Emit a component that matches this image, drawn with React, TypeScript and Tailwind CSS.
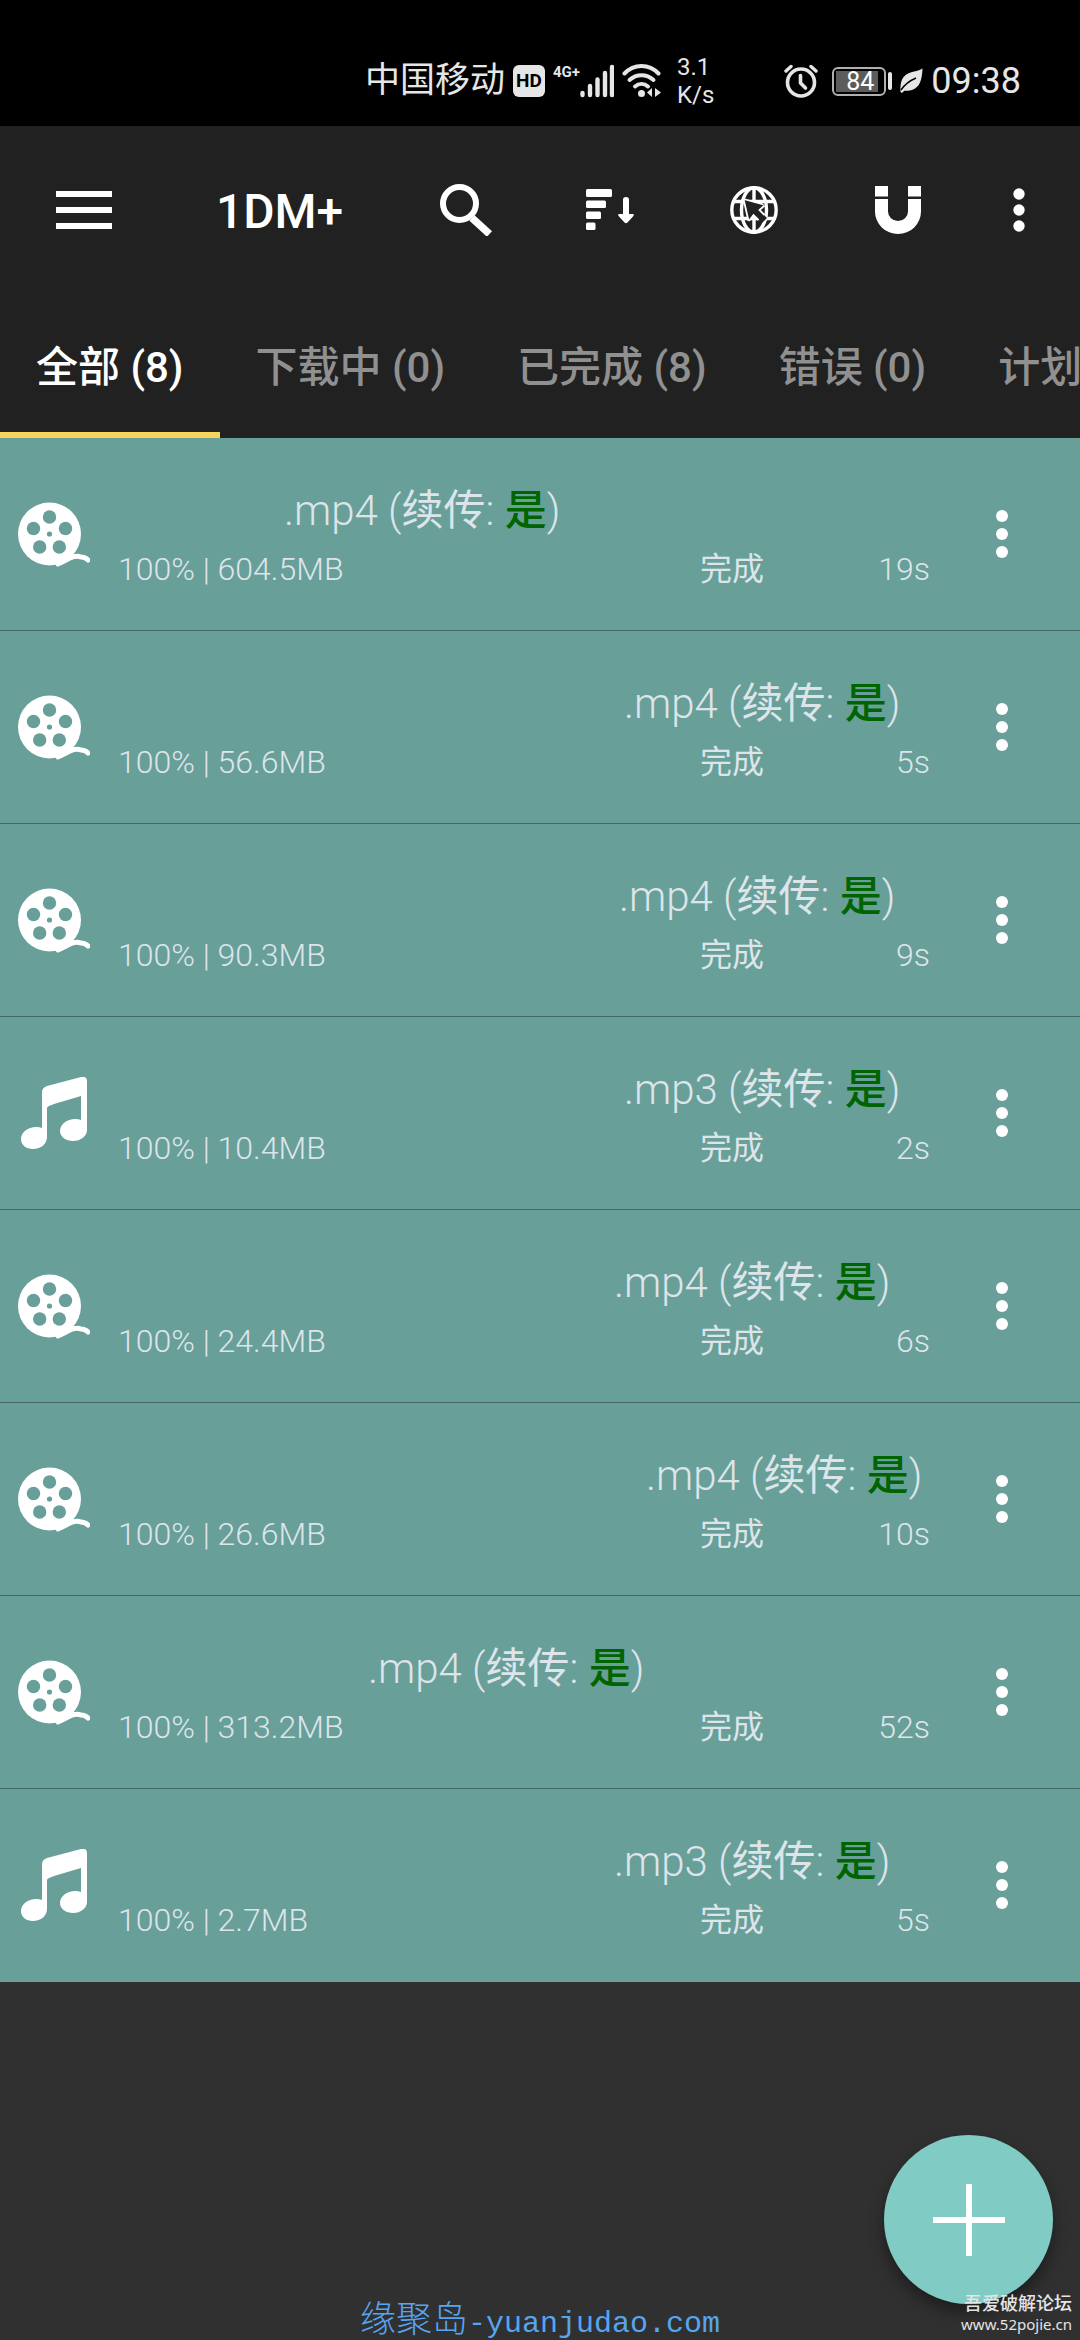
import { useState } from 'react';

type Download = {
  kind: 'video' | 'audio';
  ext: string;
  indent: string;
  size: string;
  time: string;
};

const downloads: Download[] = [
  { kind: 'video', ext: '.mp4', indent: 'pl-[166px]', size: '604.5MB', time: '19s' },
  { kind: 'video', ext: '.mp4', indent: 'pl-[506px]', size: '56.6MB', time: '5s' },
  { kind: 'video', ext: '.mp4', indent: 'pl-[501px]', size: '90.3MB', time: '9s' },
  { kind: 'audio', ext: '.mp3', indent: 'pl-[506px]', size: '10.4MB', time: '2s' },
  { kind: 'video', ext: '.mp4', indent: 'pl-[496px]', size: '24.4MB', time: '6s' },
  { kind: 'video', ext: '.mp4', indent: 'pl-[528px]', size: '26.6MB', time: '10s' },
  { kind: 'video', ext: '.mp4', indent: 'pl-[250px]', size: '313.2MB', time: '52s' },
  { kind: 'audio', ext: '.mp3', indent: 'pl-[496px]', size: '2.7MB', time: '5s' },
];

const tabs = ['全部 (8)', '下载中 (0)', '已完成 (8)', '错误 (0)', '计划'];

function FilmIcon() {
  return (
    <svg width="72" height="72" viewBox="0 0 72 72" fill="none">
      <circle cx="31.5" cy="36" r="31.5" fill="#fff" />
      <path d="M40 66c10-4 16-10 23-7 3 0 5 1 7 3" stroke="#fff" strokeWidth="5" strokeLinecap="round" />
      <path d="M36 66c12-1 18-10 26-6l-6-4z" fill="#fff" />
      <g fill="#689f99">
        <circle cx="31.5" cy="19" r="6.7" />
        <circle cx="47.5" cy="30.5" r="6.7" />
        <circle cx="41.3" cy="49" r="6.7" />
        <circle cx="21.7" cy="49" r="6.7" />
        <circle cx="15.5" cy="30.5" r="6.7" />
        <circle cx="31.5" cy="36" r="2.6" />
      </g>
    </svg>
  );
}

function MusicIcon() {
  return (
    <svg width="72" height="72" viewBox="0 0 72 72" fill="#fff">
      <path
        fillRule="evenodd"
        d="M24 15c0-3 2-5 5-6L63 0c4-1 6 1 6 4v49c0 6-6 11-14 11-7 0-13-4-13-10 0-7 7-12 15-12 2 0 4 0 6 1V19L36 27c-5 2-7 2-7 5v28c0 7-6 12-14 12-7 0-12-4-12-10 0-7 7-12 15-12 2 0 4 0 6 1z"
      />
    </svg>
  );
}

function StatusBar() {
  return (
    <div className="flex h-[126px] items-center justify-end bg-black pr-[59px] pt-9 text-[#e6e6e6]">
      <span className="mr-2 text-[35px] leading-10">中国移动</span>
      <span className="mr-2 flex h-8 w-8 items-center justify-center rounded-md bg-[#e6e6e6] text-[19px] font-bold text-black">
        HD
      </span>
      <span className="flex h-[34px] items-start text-[15px] leading-4 font-bold">4G+</span>
      <svg className="mr-2" width="34" height="34" viewBox="0 0 34 34" stroke="currentColor" strokeWidth="4.4" strokeLinecap="round">
        <path d="M2.5 29v2M10 22v9M17.5 15.5v15.5M25 9v22M32 3v28" />
      </svg>
      <svg className="mr-4" width="39" height="34" viewBox="0 0 39 34" fill="none" stroke="currentColor" strokeWidth="4" strokeLinecap="round">
        <path d="M2.5 9.5C12-.5 27-.5 36.5 9.5" />
        <path d="M7.5 16c7-6.5 17-6.5 24 0" />
        <path d="M13 22.5c4-3.5 9-3.5 13 0" />
        <circle cx="19.5" cy="29.5" r="3.5" fill="currentColor" stroke="none" />
        <path d="M30 24v9l-5-4.5zM33 24v9l6-4.5z" fill="currentColor" stroke="none" />
      </svg>
      <span className="mr-[70px] text-2xl leading-7">
        3.1
        <br />
        K/s
      </span>
      <svg className="mr-3.5" width="34" height="34" viewBox="0 0 34 34" fill="none" stroke="currentColor" strokeLinecap="round">
        <circle cx="17" cy="18.5" r="13.5" strokeWidth="3.6" />
        <path d="M16.5 11.5v7.5l5 5" strokeWidth="3.6" strokeLinejoin="round" />
        <path d="M2 7l5-4.5M32 7l-5-4.5" strokeWidth="3.4" />
      </svg>
      <span className="flex h-[29px] w-[54px] rounded-md border-2 border-[#b0b0b0] p-0.5">
        <span className="flex w-[42px] items-center justify-end bg-[#5c5c5c] pr-1 text-[25px] leading-none text-white">84</span>
      </span>
      <span className="mr-2 ml-0.5 h-[18px] w-1 rounded-sm bg-[#e6e6e6]" />
      <svg className="mr-2" width="23" height="26" viewBox="0 0 23 26">
        <path
          d="M22.5.5C22 12 20 19 12 22c-4 1.5-7 0-8 1l-2 2-1.5-1C0 13 2 7 12 4c5-1 8-2 10.5-3.5z"
          fill="currentColor"
        />
        <path d="M1 22c4-6 8-9 15-12" stroke="#000" strokeWidth="1.4" fill="none" />
      </svg>
      <span className="text-[36px] leading-10">09:38</span>
    </div>
  );
}

function Toolbar() {
  return (
    <div className="flex h-[168px] items-center text-white">
      <button aria-label="菜单" className="flex w-[168px] justify-center">
        <svg width="56" height="38" viewBox="0 0 56 38" fill="currentColor">
          <path d="M0 0h56v6H0zM0 16h56v6H0zM0 32h56v6H0z" />
        </svg>
      </button>
      <h1 className="min-w-0 flex-1 pt-1 pl-12 text-5xl font-medium">1DM+</h1>
      <button aria-label="搜索" className="flex w-36 justify-center">
        <svg width="52" height="52" viewBox="0 0 52 52" fill="none" stroke="currentColor">
          <circle cx="19.5" cy="19.5" r="16.5" strokeWidth="6" />
          <path d="M32 34l17.5 16" strokeWidth="7.5" />
        </svg>
      </button>
      <button aria-label="排序" className="flex w-36 justify-center">
        <svg width="48" height="42" viewBox="0 0 48 42" fill="currentColor">
          <rect width="26" height="8" rx="1.5" />
          <rect y="11.5" width="20" height="7.5" rx="1.5" />
          <rect y="22.5" width="15" height="7.5" rx="1.5" />
          <rect y="33.5" width="9.5" height="7.5" rx="1.5" />
          <path d="M37 10.5q0-2.5 3-2.5t3 2.5V25h3.5q2.5 0 .5 2.5l-5.5 6q-1.5 1.5-3 0l-5.5-6q-2-2.5.5-2.5H37z" />
        </svg>
      </button>
      <button aria-label="浏览器" className="flex w-36 justify-center">
        <svg width="48" height="48" viewBox="0 0 48 48" fill="none" stroke="currentColor" strokeWidth="3.4">
          <circle cx="24" cy="24" r="22.2" />
          <ellipse cx="24" cy="24" rx="12.5" ry="22.2" />
          <path d="M24 2v44M4 15.5h40M4 32.5h40" />
          <path d="M13.5 13l21 6.5-5.5 4.5 8 8-5 5-8.5-8-4.5 6z" fill="#212121" stroke="none" />
          <path d="M13.5 13l5 22M13.5 13l20 5.500M34.500 19.500l-5 4.500 5 5M19 35l4.500-6 5 5" strokeWidth="1.800" />
        </svg>
      </button>
      <button aria-label="磁力链接" className="flex w-36 justify-center">
        <svg width="46" height="48" viewBox="0 0 46 48" fill="currentColor">
          <path d="M0 0h13v10.5H0zM33 0h13v10.5H33z" />
          <path d="M0 13h13v12.5a10 9.5 0 0 0 20 0V13h13v12.5a23 22.5 0 0 1-46 0z" />
        </svg>
      </button>
      <button aria-label="更多" className="mr-3 flex w-[98px] justify-center">
        <svg width="12" height="44" viewBox="0 0 12 44" fill="currentColor">
          <circle cx="6" cy="6" r="5.7" />
          <circle cx="6" cy="22" r="5.7" />
          <circle cx="6" cy="38" r="5.7" />
        </svg>
      </button>
    </div>
  );
}

function DownloadRow({ item }: { item: Download }) {
  return (
    <li className="flex h-[193px] items-center border-b border-[#456663] bg-[#689f99] font-light text-[#dde5ea] last:border-[#689f99]">
      <div className="w-[118px] shrink-0 pl-[18px]">{item.kind === 'video' ? <FilmIcon /> : <MusicIcon />}</div>
      <div className="min-w-0 flex-1 pt-1.5">
        <p className={`text-[42px] leading-16 whitespace-nowrap ${item.indent}`}>
          {item.ext} (<span className="font-normal">续传</span>: <span className="font-medium text-[#006400]">是</span>)
        </p>
        <div className="flex text-[32px] leading-[52px]">
          <span className="flex-1">100% | {item.size}</span>
          <span className="flex w-[230px] justify-between">
            <span className="font-normal">完成</span>
            <span>{item.time}</span>
          </span>
        </div>
      </div>
      <button aria-label="更多操作" className="mr-1.5 flex w-36 justify-center">
        <svg width="12" height="48" viewBox="0 0 12 48" fill="#fff">
          <circle cx="6" cy="6" r="6" />
          <circle cx="6" cy="24" r="6" />
          <circle cx="6" cy="42" r="6" />
        </svg>
      </button>
    </li>
  );
}

export default function App() {
  const [active, setActive] = useState(0);

  return (
    <div className="relative min-h-screen overflow-hidden bg-[#313031] font-[Roboto,'Noto_Sans_CJK_SC',sans-serif]">
      <StatusBar />
      <header className="bg-[#212121]">
        <Toolbar />
        <nav className="flex h-36 overflow-hidden">
          {tabs.map((tab, i) => (
            <button
              key={tab}
              onClick={() => setActive(i)}
              className={`shrink-0 border-b-[6px] px-9 pt-2 text-[42px] font-medium whitespace-nowrap ${
                i === active ? 'border-[#f5d65b] text-white' : 'border-transparent text-[#909090]'
              }`}
            >
              {tab}
            </button>
          ))}
        </nav>
      </header>

      <ul>
        {downloads.map((item, i) => (
          <DownloadRow key={i} item={item} />
        ))}
      </ul>

      <button
        aria-label="添加下载"
        className="absolute right-[27px] bottom-9 flex h-[169px] w-[169px] items-center justify-center rounded-full bg-[#80cbc4] shadow-[0_8px_16px_rgba(0,0,0,0.4)]"
      >
        <svg width="72" height="72" viewBox="0 0 72 72" fill="#fff">
          <path d="M33 0h6v33h33v6H39v33h-6V39H0v-6h33z" />
        </svg>
      </button>

      <p className="absolute right-2 bottom-1.5 text-right font-['Noto_Sans','Noto_Sans_CJK_SC',sans-serif] text-[15px] leading-5 text-[#e4e4e4]">
        <span className="text-[18px] font-medium">吾爱破解论坛</span>
        <br />
        www.52pojie.cn
      </p>

      <p className="absolute inset-x-0 bottom-0 text-center text-[36px] leading-8 font-light text-[#56a5f0]">
        缘聚岛<span className="font-['Liberation_Mono',monospace] text-[30px]">-yuanjudao.com</span>
      </p>
    </div>
  );
}
